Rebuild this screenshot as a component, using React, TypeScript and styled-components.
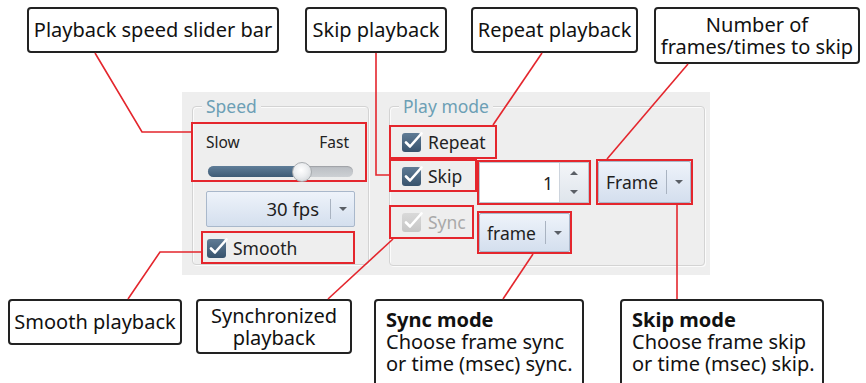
import React from 'react'
import styled, { createGlobalStyle } from 'styled-components'

const GlobalStyle = createGlobalStyle`
  html, body {
    margin: 0;
    padding: 0;
    background: #ffffff;
  }
  body {
    font-family: "Noto Sans", "Open Sans", sans-serif;
  }
`;

const Canvas = styled("div")`
  position: relative;
  width: 866px;
  height: 383px;
  overflow: hidden;
  background: #ffffff;
`;

// the screenshot of the dialog part
const Panel = styled("div")`
  position: absolute;
  left: 182px;
  top: 92px;
  width: 528px;
  height: 183px;
  box-sizing: border-box;
  padding: 14px 5px 0 10px;
  background: #eeeeee;
  display: flex;
  align-items: flex-start;
  column-gap: 20px;
  color: #222;
  font-size: 17.5px;
`;

const GroupBox = styled("div")<{ $w: number; $h: number }>`
  position: relative;
  box-sizing: border-box;
  width: ${p => p.$w}px;
  height: ${p => p.$h}px;
  border: 1px solid #d3d3d3;
  border-radius: 4px;
  box-shadow: inset 1px 1px 0 #fbfbfb, 1px 1px 0 #fbfbfb;
  display: flex;
  flex-direction: column;
`;

const GroupTitle = styled("span")`
  position: absolute;
  left: 9px;
  top: -12px;
  padding: 0 4px;
  background: #eeeeee;
  color: #6c9fb5;
  font-size: 17.5px;
  line-height: 22px;
`;

const Highlight = styled("div")<{ $w: number; $h: number }>`
  box-sizing: border-box;
  width: ${p => p.$w}px;
  height: ${p => p.$h}px;
  border: 2px solid #e4262d;
  flex-shrink: 0;
`;

const SliderArea = styled(Highlight)`
  margin: 15px 0 0 -2px;
  padding: 8px 16px 0 13px;
  display: flex;
  flex-direction: column;
`;

const SliderLabels = styled("div")`
  display: flex;
  justify-content: space-between;
  font-size: 15.5px;
  line-height: 20px;
`;

const Track = styled("div")`
  position: relative;
  height: 11px;
  margin: 14px -4px 0 2px;
  border-radius: 6px;
  background: linear-gradient(#b9bdc2, #cdd0d4);
  box-shadow: inset 0 1px 1px rgba(0, 0, 0, 0.15);
`;

const TrackFill = styled("div")`
  height: 100%;
  border-radius: 6px 0 0 6px;
  background: linear-gradient(#5f7d98, #3e5b76);
`;

const Thumb = styled("div")`
  position: absolute;
  top: 50%;
  width: 20px;
  height: 20px;
  margin: -10px 0 0 -10px;
  border-radius: 50%;
  box-sizing: border-box;
  border: 1px solid #a8acb0;
  background: radial-gradient(circle at 45% 40%, #ffffff 0%, #eceef0 45%, #c9cdd1 100%);
`;

const ComboBox = styled("div")`
  box-sizing: border-box;
  display: flex;
  align-items: center;
  border: 1px solid #a9b8cb;
  border-radius: 2px;
  background: linear-gradient(#eef3fa, #d4dfee);
  color: #1e1e1e;
`;

const SpeedCombo = styled(ComboBox)`
  width: 149px;
  height: 37px;
  margin: 9px 0 0 13px;
  font-size: 18.5px;
`;

const FillCombo = styled(ComboBox)`
  width: 100%;
  height: 100%;
`;

const ComboText = styled("span")<{ $right?: boolean }>`
  flex: 1;
  text-align: ${p => (p.$right ? 'right' : 'left')};
  padding: ${p => (p.$right ? '0 11px 0 0' : '0 0 0 7px')};
  line-height: 20px;
`;

const ComboArrow = styled("span")`
  width: 23px;
  height: 60%;
  border-left: 1px solid #a9b3c1;
  display: flex;
  align-items: center;
  justify-content: center;
  &::after {
    content: "";
    border-left: 4px solid transparent;
    border-right: 4px solid transparent;
    border-top: 4px solid #5a5f66;
  }
`;

const CheckRow = styled(Highlight)<{ $pad: number }>`
  display: flex;
  align-items: center;
  column-gap: 5px;
  padding-left: ${p => p.$pad}px;
`;

const CheckLabel = styled("span")<{ $disabled?: boolean }>`
  color: ${p => (p.$disabled ? '#a9a9a9' : '#222')};
  line-height: 22px;
`;

const ModeBody = styled("div")`
  margin: 18px 0 0 -1px;
  display: flex;
  flex-direction: column;
`;

const ModeRow = styled("div")`
  display: flex;
  align-items: flex-start;
`;

const Spin = styled("div")`
  box-sizing: border-box;
  width: 100%;
  height: 100%;
  display: flex;
  border: 1px solid #bcc5d0;
  background: #ffffff;
`;

const SpinValue = styled("span")`
  flex: 1;
  text-align: right;
  padding-right: 6px;
  align-self: center;
  line-height: 20px;
`;

const SpinButtons = styled("div")`
  width: 28px;
  border-left: 1px solid #cdd4dd;
  background: linear-gradient(#f3f5f8, #dfe5ec);
  display: flex;
  flex-direction: column;
`;

const SpinStep = styled("span")<{ $down?: boolean }>`
  flex: 1;
  display: flex;
  align-items: center;
  justify-content: center;
  &::after {
    content: "";
    border-left: 4px solid transparent;
    border-right: 4px solid transparent;
    ${p => (p.$down ? 'border-top: 4px solid #5a5f66;' : 'border-bottom: 4px solid #5a5f66;')}
  }
`;

const Callout = styled("div")<{ $x: number; $y: number; $w: number; $h: number; $left?: boolean }>`
  position: absolute;
  left: ${p => p.$x}px;
  top: ${p => p.$y}px;
  width: ${p => p.$w}px;
  height: ${p => p.$h}px;
  box-sizing: border-box;
  border: 2px solid #222;
  border-radius: 4px;
  background: #ffffff;
  color: #111;
  font-size: 20px;
  line-height: 22px;
  display: flex;
  flex-direction: column;
  justify-content: ${p => (p.$left ? 'flex-start' : 'center')};
  align-items: ${p => (p.$left ? 'flex-start' : 'center')};
  text-align: ${p => (p.$left ? 'left' : 'center')};
  padding: ${p => (p.$left ? '8px 0 0 10px' : '0')};
  white-space: nowrap;
`;

const CalloutLine = styled("div")<{ $bold?: boolean }>`
  display: block;
  height: 22px;
  font-weight: ${p => (p.$bold ? 700 : 400)};
`;

const Leaders = styled("svg")`
  position: absolute;
  left: 0;
  top: 0;
  pointer-events: none;
`;

const CheckBox = ({ disabled }: { disabled?: boolean }) => (
  <svg width="22" height="22" viewBox="0 0 22 22">
    <defs>
      <linearGradient id={disabled ? 'cbd' : 'cbe'} x1="0" y1="0" x2="0" y2="1">
        <stop offset="0" stopColor={disabled ? '#d9d9d9' : '#5f7b95'} />
        <stop offset="1" stopColor={disabled ? '#c6c6c6' : '#38536d'} />
      </linearGradient>
    </defs>
    <rect x="1" y="2" width="19" height="19" rx="3" fill={`url(#${disabled ? 'cbd' : 'cbe'})`} />
    <path d="M5 11.5 L9 15.5 L20.5 2.5" fill="none" stroke="#ffffff" strokeWidth="2.6" strokeLinecap="round" strokeLinejoin="round" />
  </svg>
);

const lines = [
  '95,53 142,132 191,132',
  '376,53 376,175 389,175',
  '542,53 493,125',
  '688,64 607,159',
  '128,299 160,252 201,252',
  '328,299 393,239',
  '503,299 533,254',
  '677,205 677,299',
];

const App = () => {
  const speed = 65;

  return (
    <Canvas>
      <GlobalStyle />
      <Panel>
        <GroupBox $w={177} $h={159}>
          <GroupTitle>Speed</GroupTitle>
          <SliderArea $w={176} $h={60}>
            <SliderLabels>
              <span>Slow</span>
              <span>Fast</span>
            </SliderLabels>
            <Track>
              <TrackFill style={{ width: `${speed}%` }} />
              <Thumb style={{ left: `${speed}%` }} />
            </Track>
          </SliderArea>
          <SpeedCombo>
            <ComboText $right>30 fps</ComboText>
            <ComboArrow />
          </SpeedCombo>
          <CheckRow $w={154} $h={33} $pad={3} style={{ marginTop: 4, marginLeft: 8 }}>
            <CheckBox />
            <CheckLabel>Smooth</CheckLabel>
          </CheckRow>
        </GroupBox>

        <GroupBox $w={316} $h={160}>
          <GroupTitle>Play mode</GroupTitle>
          <ModeBody>
            <CheckRow $w={108} $h={34} $pad={10}>
              <CheckBox />
              <CheckLabel>Repeat</CheckLabel>
            </CheckRow>
            <ModeRow>
              <CheckRow $w={88} $h={33} $pad={10}>
                <CheckBox />
                <CheckLabel>Skip</CheckLabel>
              </CheckRow>
              <Highlight $w={114} $h={45} style={{ marginTop: 1 }}>
                <Spin>
                  <SpinValue>1</SpinValue>
                  <SpinButtons>
                    <SpinStep />
                    <SpinStep $down />
                  </SpinButtons>
                </Spin>
              </Highlight>
              <Highlight $w={97} $h={46} style={{ marginLeft: 5 }}>
                <FillCombo>
                  <ComboText>Frame</ComboText>
                  <ComboArrow />
                </FillCombo>
              </Highlight>
            </ModeRow>
            <ModeRow>
              <CheckRow $w={85} $h={34} $pad={10}>
                <CheckBox disabled />
                <CheckLabel $disabled>Sync</CheckLabel>
              </CheckRow>
              <Highlight $w={95} $h={43} style={{ marginLeft: 3, marginTop: 6 }}>
                <FillCombo>
                  <ComboText>frame</ComboText>
                  <ComboArrow />
                </FillCombo>
              </Highlight>
            </ModeRow>
          </ModeBody>
        </GroupBox>
      </Panel>

      <Callout $x={27} $y={7} $w={252} $h={46}>Playback speed slider bar</Callout>
      <Callout $x={305} $y={7} $w={142} $h={46}>Skip playback</Callout>
      <Callout $x={471} $y={7} $w={167} $h={46}>Repeat playback</Callout>
      <Callout $x={654} $y={7} $w={206} $h={57}>
        <CalloutLine>Number of</CalloutLine>
        <CalloutLine>frames/times to skip</CalloutLine>
      </Callout>
      <Callout $x={8} $y={299} $w={174} $h={46}>Smooth playback</Callout>
      <Callout $x={196} $y={299} $w={156} $h={55}>
        <CalloutLine>Synchronized</CalloutLine>
        <CalloutLine>playback</CalloutLine>
      </Callout>
      <Callout $x={374} $y={299} $w={210} $h={100} $left>
        <CalloutLine $bold>Sync mode</CalloutLine>
        <CalloutLine>Choose frame sync</CalloutLine>
        <CalloutLine>or time (msec) sync.</CalloutLine>
      </Callout>
      <Callout $x={620} $y={299} $w={204} $h={100} $left>
        <CalloutLine $bold>Skip mode</CalloutLine>
        <CalloutLine>Choose frame skip</CalloutLine>
        <CalloutLine>or time (msec) skip.</CalloutLine>
      </Callout>

      <Leaders width="866" height="383">
        {lines.map(pts => (
          <polyline key={pts} points={pts} fill="none" stroke="#e4262d" strokeWidth="1.6" />
        ))}
      </Leaders>
    </Canvas>
  )
}

export default App
